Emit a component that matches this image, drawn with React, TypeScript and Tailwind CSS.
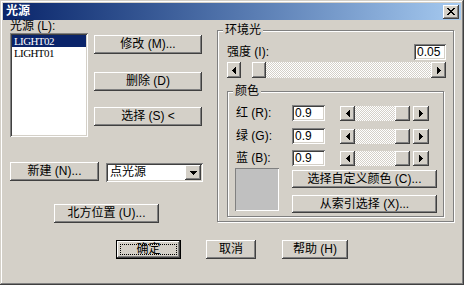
import React from "react";

const raised =
  "bg-[#d4d0c8] shadow-[inset_-1px_-1px_#404040,inset_1px_1px_#ffffff,inset_-2px_-2px_#808080,inset_2px_2px_#d4d0c8]";
const sunken =
  "bg-white shadow-[inset_1px_1px_#808080,inset_-1px_-1px_#ffffff,inset_2px_2px_#404040,inset_-2px_-2px_#d4d0c8]";
const dither =
  "bg-[repeating-conic-gradient(#ffffff_0%_25%,#d4d0c8_0%_50%)] [background-size:2px_2px]";

function Btn({ className = "", children }: { className?: string; children: React.ReactNode }) {
  return (
    <div className={`${raised} flex items-center justify-center whitespace-nowrap ${className}`}>
      {children}
    </div>
  );
}

function ArrowLeft() {
  return (
    <svg width="4" height="7" shapeRendering="crispEdges">
      <rect x="0" y="3" width="1" height="1" fill="#000" />
      <rect x="1" y="2" width="1" height="3" fill="#000" />
      <rect x="2" y="1" width="1" height="5" fill="#000" />
      <rect x="3" y="0" width="1" height="7" fill="#000" />
    </svg>
  );
}
function ArrowRight() {
  return (
    <svg width="4" height="7" shapeRendering="crispEdges">
      <rect x="3" y="3" width="1" height="1" fill="#000" />
      <rect x="2" y="2" width="1" height="3" fill="#000" />
      <rect x="1" y="1" width="1" height="5" fill="#000" />
      <rect x="0" y="0" width="1" height="7" fill="#000" />
    </svg>
  );
}
function ArrowDown() {
  return (
    <svg width="7" height="4" shapeRendering="crispEdges">
      <rect x="0" y="0" width="7" height="1" fill="#000" />
      <rect x="1" y="1" width="5" height="1" fill="#000" />
      <rect x="2" y="2" width="3" height="1" fill="#000" />
      <rect x="3" y="3" width="1" height="1" fill="#000" />
    </svg>
  );
}
function CloseGlyph() {
  const px: [number, number, number][] = [
    [0, 0, 2], [6, 0, 2],
    [1, 1, 2], [5, 1, 2],
    [2, 2, 4],
    [3, 3, 2],
    [2, 4, 4],
    [1, 5, 2], [5, 5, 2],
    [0, 6, 2], [6, 6, 2],
  ];
  return (
    <svg width="8" height="7" shapeRendering="crispEdges">
      {px.map(([x, y, w], i) => (
        <rect key={i} x={x} y={y} width={w} height="1" fill="#000" />
      ))}
    </svg>
  );
}

function ArrowBtn({ dir, className = "" }: { dir: "l" | "r"; className?: string }) {
  return (
    <div className={`${raised} flex items-center justify-center shrink-0 h-full ${className}`}>
      {dir === "l" ? <ArrowLeft /> : <ArrowRight />}
    </div>
  );
}

function Group({
  title,
  className = "",
  children,
}: {
  title: string;
  className?: string;
  children: React.ReactNode;
}) {
  return (
    <div
      className={`relative border border-[#808080] shadow-[inset_1px_1px_#ffffff,1px_1px_#ffffff] ${className}`}
    >
      <span className="absolute -top-[7px] left-[5px] px-[2px] bg-[#d4d0c8] leading-[13px]">
        {title}
      </span>
      {children}
    </div>
  );
}

function ColorRow({ label, mn, className = "" }: { label: string; mn: string; className?: string }) {
  return (
    <div className={`flex items-center h-[16px] ${className}`}>
      <span className="w-[57px] pl-[1px]">
        {label} ({mn}):
      </span>
      <div className={`${sunken} w-[33px] h-[16px] pl-[3px] flex items-center`}>0.9</div>
      <div className="ml-[15px] w-[89px] h-[15px] flex">
        <ArrowBtn dir="l" className="w-[15px]" />
        <div className={`${dither} flex-1`} />
        <div className={`${raised} w-[15px] h-full`} />
        <div className="w-[3px]" />
        <ArrowBtn dir="r" className="w-[16px]" />
      </div>
    </div>
  );
}

export default function App() {
  return (
    <div className="w-[464px] h-[285px] bg-[#d4d0c8] flex flex-col text-[12px] leading-[13px] text-black font-['Liberation_Sans','Noto_Sans_CJK_SC',sans-serif] shadow-[inset_-1px_-1px_#404040,inset_1px_1px_#d4d0c8,inset_-2px_-2px_#808080,inset_2px_2px_#ffffff]">
      {/* title bar */}
      <div className="mx-[3px] mt-[3px] h-[17px] flex items-center justify-between bg-gradient-to-r from-[#0a246a] to-[#a6caf0] pl-[3px] pr-[2px]">
        <span className="text-white font-bold">光源</span>
        <div className={`${raised} w-[16px] h-[14px] flex items-center justify-center`}>
          <CloseGlyph />
        </div>
      </div>

      {/* body */}
      <div className="flex pl-[10px]">
        {/* left column */}
        <div className="w-[193px] flex flex-col">
          <div className="h-[13px]">光源 (L):</div>
          <div className="flex h-[104px]">
            <div className={`${sunken} w-[78px] h-full p-[2px] flex flex-col`}>
              <div className="h-[12px] bg-[#0a246a] text-white pl-[2px] text-[11px] leading-[12px] font-['Liberation_Serif',serif] tracking-[-0.6px]">
                LIGHT02
              </div>
              <div className="h-[12px] pl-[2px] text-[11px] leading-[12px] font-['Liberation_Serif',serif] tracking-[-0.6px]">
                LIGHT01
              </div>
            </div>
            <div className="ml-[6px] flex flex-col w-[108px]">
              <Btn className="mt-[2px] h-[19px]">修改 (M)...</Btn>
              <Btn className="mt-[18px] h-[19px]">删除 (D)</Btn>
              <Btn className="mt-[16px] h-[19px]">选择 (S) &lt;</Btn>
            </div>
          </div>
          <div className="mt-[25px] flex items-start">
            <Btn className="w-[89px] h-[19px]">新建 (N)...</Btn>
            <div className={`${sunken} ml-[7px] mt-px w-[97px] h-[19px] p-[2px] flex`}>
              <div className="flex-1 flex items-center pl-[2px]">点光源</div>
              <div className={`${raised} w-[16px] h-full flex items-center justify-center`}>
                <ArrowDown />
              </div>
            </div>
          </div>
          <Btn className="mt-[22px] ml-[44px] w-[105px] h-[19px]">北方位置 (U)...</Btn>
        </div>

        {/* right group */}
        <Group title="环境光" className="ml-[14px] mt-[10px] w-[237px] h-[192px]">
          <div className="flex flex-col pl-[9px] pr-[7px] pt-[13px]">
            <div className="flex items-center justify-between h-[16px]">
              <span>强度 (I):</span>
              <div className={`${sunken} w-[32px] h-[16px] pl-[3px] flex items-center`}>0.05</div>
            </div>
            <div className="mt-[2px] h-[16px] flex">
              <ArrowBtn dir="l" className="w-[14px]" />
              <div className="w-[11px]" />
              <div className={`${raised} w-[14px] h-full`} />
              <div className={`${dither} flex-1`} />
              <ArrowBtn dir="r" className="w-[15px]" />
            </div>
            <Group title="颜色" className="mt-[13px] w-[217px] h-[126px]">
              <div className="flex flex-col pl-[7px] pt-[13px]">
                <ColorRow label="红" mn="R" />
                <ColorRow label="绿" mn="G" className="mt-[7px]" />
                <ColorRow label="蓝" mn="B" className="mt-[6px]" />
                <div className="flex items-start mt-[2px]">
                  <div className="w-[44px] h-[43px] bg-[#c0c0c0] shadow-[inset_1px_1px_#808080,inset_-1px_-1px_#ffffff]" />
                  <div className="ml-[13px] flex flex-col w-[145px]">
                    <Btn className="mt-[2px] h-[18px]">选择自定义颜色 (C)...</Btn>
                    <Btn className="mt-[7px] h-[18px]">从索引选择 (X)...</Btn>
                  </div>
                </div>
              </div>
            </Group>
          </div>
        </Group>
      </div>

      {/* bottom buttons */}
      <div className="flex mt-[17px] pl-[116px]">
        <div className="relative w-[65px] h-[19px] border border-black">
          <Btn className="w-full h-full">确定</Btn>
          <div className="absolute inset-[3px] border border-dotted border-black" />
        </div>
        <Btn className="ml-[25px] w-[50px] h-[19px]">取消</Btn>
        <Btn className="ml-[26px] w-[66px] h-[19px]">帮助 (H)</Btn>
      </div>
    </div>
  );
}
